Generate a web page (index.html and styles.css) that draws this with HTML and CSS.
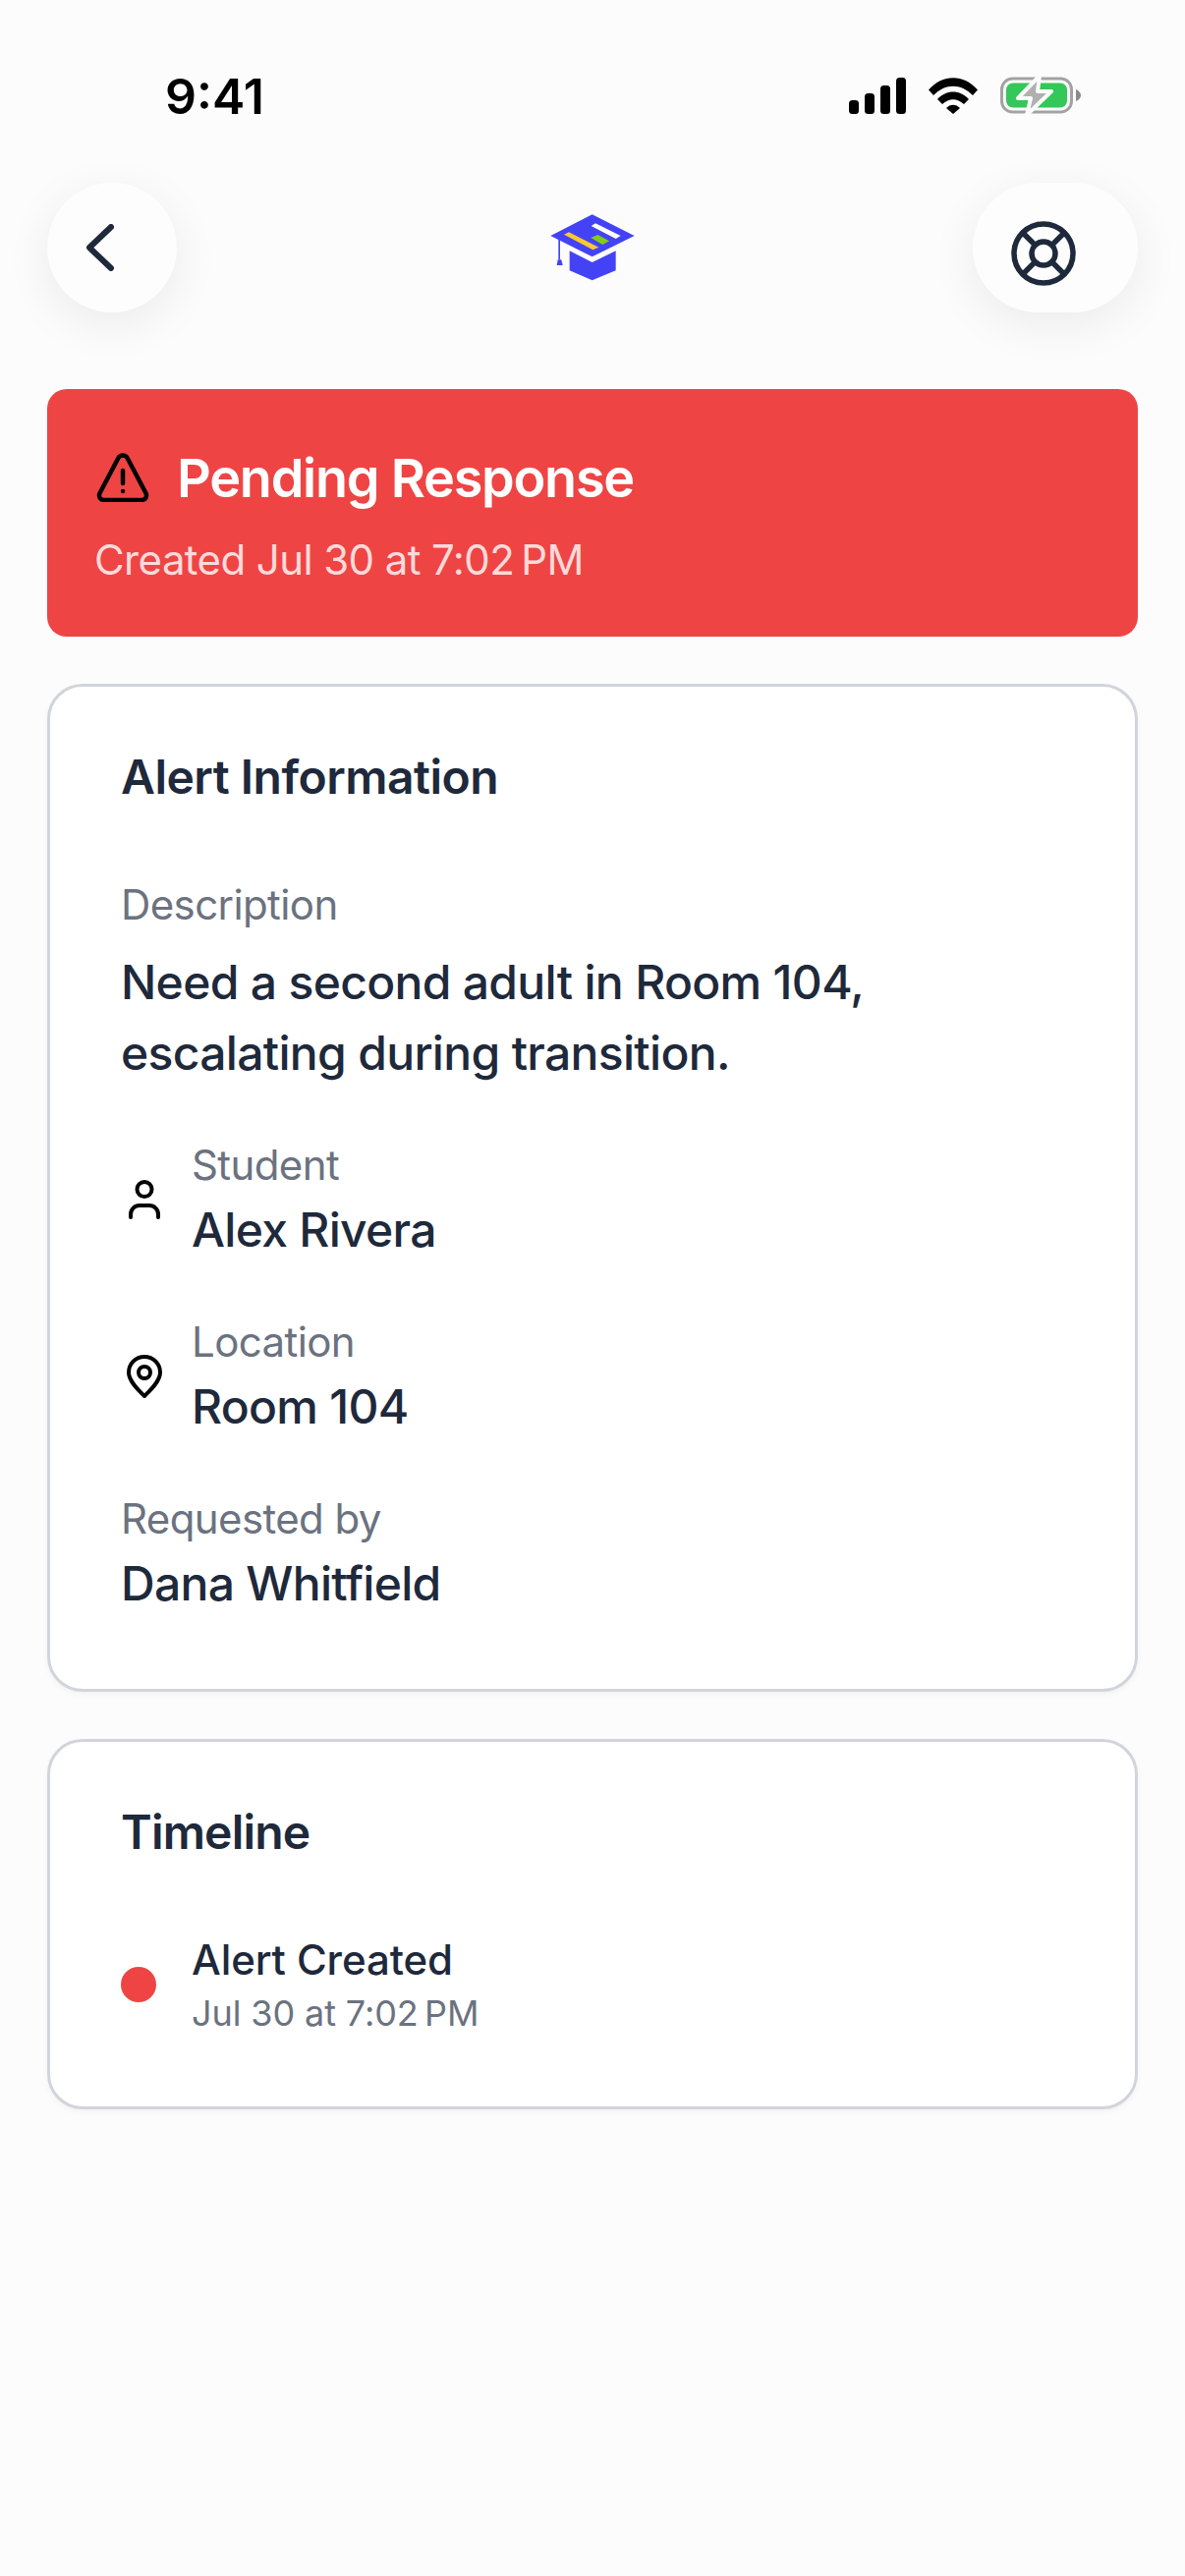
FILE: index.html
```html
<!DOCTYPE html>
<html lang="en">
<head>
    <meta charset="UTF-8">
    <title>Alert details</title>
    <meta name="viewport" content="width=device-width, initial-scale=1">
    <link rel="stylesheet" href="styles.css">
</head>
<body>

<div class="status-bar">
    <div class="time">9:41</div>
    <div class="status-icons">
        <svg class="signal" width="58" height="37" viewBox="0 0 58 37">
            <rect x="0" y="23" width="10" height="14" rx="3.5"/>
            <rect x="16" y="16" width="10" height="21" rx="3.5"/>
            <rect x="32" y="8" width="10" height="29" rx="3.5"/>
            <rect x="48" y="0" width="10" height="37" rx="3.5"/>
        </svg>
        <svg class="wifi" width="50" height="37" viewBox="0 0 50 37">
            <path d="M0 12.5 C14 -4 36 -4 50 12.5 L45 18 C33 5.5 17 5.5 5 18 Z"/>
            <path d="M9 22 C18 12 32 12 41 22 L36 27 C29 20.5 21 20.5 14 27 Z"/>
            <path d="M18 31 C22 26.5 28 26.5 32 31 L25 37 Z"/>
        </svg>
        <svg class="battery" width="82" height="40" viewBox="0 0 82 40">
            <rect x="1.5" y="3" width="71" height="34" rx="11" fill="none" stroke="#a3a3a3" stroke-width="3"/>
            <path d="M77 14 C80 15 82 18 82 20 C82 22 80 25 77 26 Z" fill="#8a8a8a"/>
            <rect x="6" y="7.500" width="62" height="25" rx="7" fill="#34c759"/>
            <path d="M40 0 L18 23 H31 L27 40 L52 16 H38 Z" fill="#b0b0b0" stroke="#fcfcfc" stroke-width="4" stroke-linejoin="round"/>
        </svg>
    </div>
</div>

<div class="top-nav">
    <div class="nav-button back-button">
        <svg width="28" height="48" viewBox="0 0 28 48" fill="none" stroke="#1e293b" stroke-width="6" stroke-linecap="round" stroke-linejoin="round">
            <path d="M25 3 L3 24 L25 45"/>
        </svg>
    </div>
    <svg class="logo" width="86" height="68" viewBox="180 86 258 204">
        <path d="M308 87 L437 152 L308 216 L181 152 Z" fill="#4343f5"/>
        <path d="M239 198 L308 233 L380 198 V258 L308 288 L239 258 Z" fill="#4343f5"/>
        <path d="M205 155 H210 V225 H205 Z" fill="#4343f5"/>
        <path d="M203 225 H214 L218 242 H200 Z" fill="#4343f5"/>
        <path d="M222 148 L237 141 L328 187 L310 195 Z" fill="#fbc82f"/>
        <path d="M305 122 L318 114 L395 152 L380 161 Z" fill="#ffffff"/>
        <path d="M304 158 L325 149 L360 168 L340 179 Z" fill="#84cc16"/>
    </svg>
    <div class="nav-button help-button">
        <svg width="66" height="66" viewBox="0 0 66 66" fill="none" stroke="#1e293b" stroke-width="5.500">
            <circle cx="33" cy="33" r="30"/>
            <circle cx="33" cy="33" r="12"/>
            <path d="M12 12 L24.500 24.500 M54 12 L41.500 24.500 M12 54 L24.500 41.500 M54 54 L41.500 41.500"/>
        </svg>
    </div>
</div>

<div class="content">
    <div class="status-banner">
        <div class="banner-title">
            <svg width="54" height="50" viewBox="0 0 54 50" fill="none" stroke="#000" stroke-width="4.500" stroke-linecap="round" stroke-linejoin="round">
                <path d="M22.500 5 C24.500 1.500 29.500 1.500 31.500 5 L50.500 41 C52 44.500 50 48 46 48 H8 C4 48 2 44.500 3.500 41 Z"/>
                <path d="M27 18 V31"/>
                <path d="M27 39 V39.100"/>
            </svg>
            <span>Pending Response</span>
        </div>
        <div class="banner-sub">Created Jul 30 at 7:02&#8239;PM</div>
    </div>

    <div class="card info-card">
        <div class="card-title">Alert Information</div>

        <div class="description">
            <div class="label">Description</div>
            <div class="desc-text">Need a second adult in Room 104, escalating during transition.</div>
        </div>

        <div class="field icon-field student-field">
            <svg width="36" height="44" viewBox="0 0 36 44" fill="none" stroke="#000" stroke-width="4" stroke-linecap="round">
                <circle cx="18" cy="11.500" r="7.500"/>
                <path d="M4 40 V37 C4 32 8 28 13 28 H23 C28 28 32 32 32 37 V40"/>
            </svg>
            <div>
                <div class="label">Student</div>
                <div class="value">Alex Rivera</div>
            </div>
        </div>

        <div class="field icon-field">
            <svg width="36" height="44" viewBox="0 0 36 44" fill="none" stroke="#000" stroke-width="4" stroke-linejoin="round">
                <path d="M18 2 C9 2 2 9 2 18 C2 27 12 36 18 42 C24 36 34 27 34 18 C34 9 27 2 18 2 Z"/>
                <circle cx="18" cy="18" r="6"/>
            </svg>
            <div>
                <div class="label">Location</div>
                <div class="value">Room 104</div>
            </div>
        </div>

        <div class="field">
            <div class="label">Requested by</div>
            <div class="value">Dana Whitfield</div>
        </div>
    </div>

    <div class="card timeline-card">
        <div class="card-title">Timeline</div>
        <div class="timeline-item">
            <div class="dot"></div>
            <div>
                <div class="event-name">Alert Created</div>
                <div class="event-date">Jul 30 at 7:02&#8239;PM</div>
            </div>
        </div>
    </div>
</div>

</body>
</html>
```

FILE: styles.css
```css
html {
    background-color: #fcfcfc;
}

body {
    margin: 0;
    width: 1206px;
    min-height: 2622px;
    font-family: Inter, "Noto Sans", sans-serif;
    color: #1e293b;
}

.status-bar {
    height: 186px;
    padding: 70px 106px 0 168px;
    box-sizing: border-box;
    display: flex;
    justify-content: space-between;
    align-items: flex-start;
}

.time {
    font-size: 50px;
    font-weight: 600;
    line-height: 56px;
    color: #000;
}

.status-icons {
    display: flex;
    align-items: flex-start;
    gap: 23px;
    padding-top: 9px;
}

.signal, .wifi {
    fill: #000;
}

.battery {
    margin-top: -2px;
}

.top-nav {
    height: 132px;
    margin: 0 48px 78px;
    display: grid;
    grid-template-columns: 1fr auto 1fr;
    align-items: center;
}

.nav-button {
    height: 132px;
    box-sizing: border-box;
    border-radius: 66px;
    background: #fdfdfd;
    box-shadow: 0 12px 48px rgba(0, 0, 0, 0.07);
    display: flex;
    align-items: center;
}

.back-button {
    width: 132px;
    padding-left: 40px;
}

.help-button {
    justify-self: end;
    width: 168px;
    padding: 12px 0 0 39px;
}

.content {
    margin: 0 48px;
    display: flex;
    flex-direction: column;
}

.status-banner {
    height: 252px;
    box-sizing: border-box;
    padding: 60px 48px 0;
    background: #ef4444;
    border-radius: 20px;
}

.banner-title {
    display: flex;
    align-items: center;
    gap: 28px;
    height: 60px;
    font-size: 54px;
    font-weight: 600;
    letter-spacing: -1.25px;
    color: #fff;
}

.banner-title svg {
    margin-left: 2px;
}

.banner-sub {
    margin-top: 29px;
    font-size: 42px;
    line-height: 50px;
    letter-spacing: -0.6px;
    color: #fcdada;
}

.card {
    margin-top: 48px;
    box-sizing: border-box;
    padding: 63px 72px 78px;
    background: #fff;
    border: 3px solid #d1d5db;
    border-radius: 36px;
    box-shadow: 0 3px 6px rgba(0, 0, 0, 0.04);
}

.timeline-card {
    padding-bottom: 70px;
}

.card-title {
    font-size: 48px;
    font-weight: 600;
    line-height: 58px;
    letter-spacing: -0.5px;
}

.timeline-card .card-title {
    letter-spacing: -0.8px;
}

.label {
    font-size: 42px;
    line-height: 50px;
    letter-spacing: -0.6px;
    color: #6b7280;
}

.value {
    margin-top: 12px;
    font-size: 48px;
    font-weight: 500;
    line-height: 58px;
    letter-spacing: -0.7px;
}

.description {
    margin-top: 76px;
}

.desc-text {
    margin-top: 18px;
    font-size: 48px;
    font-weight: 500;
    line-height: 72px;
    letter-spacing: -0.68px;
}

.field {
    margin-top: 60px;
}

.student-field {
    margin-top: 53px;
}

.icon-field {
    display: flex;
    align-items: center;
    gap: 30px;
    padding-left: 6px;
}

.timeline-item {
    margin-top: 76px;
    display: flex;
    align-items: center;
    gap: 36px;
}

.dot {
    width: 36px;
    height: 36px;
    margin-bottom: 5px;
    border-radius: 50%;
    background: #ef4444;
}

.event-name {
    font-size: 42px;
    font-weight: 500;
    line-height: 50px;
    letter-spacing: -0.1px;
}

.event-date {
    margin-top: 4px;
    font-size: 36px;
    line-height: 50px;
    letter-spacing: -0.1px;
    color: #6b7280;
}
```
